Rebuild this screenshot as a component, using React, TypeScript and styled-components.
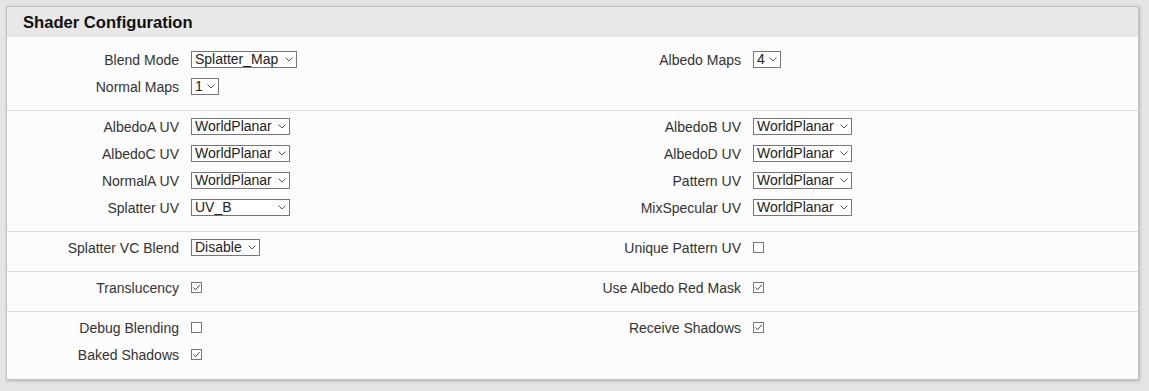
import React from 'react';
import styled, { createGlobalStyle } from 'styled-components';

const GlobalStyle = createGlobalStyle`
    html, body {
        margin: 0;
        padding: 0;
        background: #e5e5e5;
        font-family: "Liberation Sans", Arial, sans-serif;
    }
`;

const Page = styled.div`
    padding: 6px 10px 10px 6px;
`;

const Panel = styled.section`
    background: #fcfcfc;
    border: 1px solid #c2c2c2;
    box-shadow: 1px 1px 3px rgba(0, 0, 0, 0.22);
`;

const Header = styled.header`
    background: #e8e8e8;
    height: 28px;
    padding: 2px 16px 0;
    display: flex;
    align-items: center;
    font-size: 16.6px;
    font-weight: bold;
    color: #111;
`;

const Body = styled.div`
    padding: 7px 0 1px;
`;

const Section = styled.div`
    display: grid;
    grid-template-columns: 172px 366px 172px 1fr;
    grid-auto-rows: 27px;
    column-gap: 12px;
    align-items: center;
    padding: 2px 0 10px;
    & + & {
        border-top: 1px solid #dcdcdc;
    }
`;

const Label = styled.label`
    text-align: right;
    font-size: 14px;
    color: #333;
    white-space: nowrap;
`;

const SelectWrap = styled.span<{ $width: number }>`
    position: relative;
    display: inline-flex;
    width: ${({ $width }) => $width}px;
    height: 17px;
    justify-self: start;
`;

const NativeSelect = styled.select`
    appearance: none;
    width: 100%;
    height: 100%;
    margin: 0;
    padding: 0 14px 0 3px;
    border: 1px solid #767676;
    border-radius: 0;
    background: #fff;
    font-family: "Liberation Sans", Arial, sans-serif;
    font-size: 14px;
    line-height: 15px;
    color: #222;
    outline: none;
`;

const Chevron = styled.svg`
    position: absolute;
    right: 4px;
    top: 6px;
    pointer-events: none;
`;

const CheckBox = styled.span`
    width: 11px;
    height: 11px;
    box-sizing: border-box;
    border: 1px solid #767676;
    background: #fff;
    display: inline-flex;
    align-items: center;
    justify-content: center;
    justify-self: start;
`;

function Select({ value, width }: { value: string; width: number }) {
    return (
        <SelectWrap $width={width}>
            <NativeSelect defaultValue={value}>
                <option>{value}</option>
            </NativeSelect>
            <Chevron width="8" height="5" viewBox="0 0 8 5">
                <path d="M0.5 0.5 L4 4 L7.5 0.5" fill="none" stroke="#555" strokeWidth="1" />
            </Chevron>
        </SelectWrap>
    );
}

function Check({ checked }: { checked?: boolean }) {
    return (
        <CheckBox>
            {checked && (
                <svg width="9" height="9" viewBox="0 0 9 9">
                    <path d="M1.2 4.3 L3.6 6.8 L7.8 1.8" fill="none" stroke="#444" strokeWidth="1" />
                </svg>
            )}
        </CheckBox>
    );
}

export default function App() {
    return (
        <Page>
            <GlobalStyle />
            <Panel>
                <Header>Shader Configuration</Header>
                <Body>
                    <Section>
                        <Label>Blend Mode</Label>
                        <Select value="Splatter_Map" width={106} />
                        <Label>Albedo Maps</Label>
                        <Select value="4" width={28} />
                        <Label>Normal Maps</Label>
                        <Select value="1" width={28} />
                    </Section>
                    <Section>
                        <Label>AlbedoA UV</Label>
                        <Select value="WorldPlanar" width={99} />
                        <Label>AlbedoB UV</Label>
                        <Select value="WorldPlanar" width={99} />
                        <Label>AlbedoC UV</Label>
                        <Select value="WorldPlanar" width={99} />
                        <Label>AlbedoD UV</Label>
                        <Select value="WorldPlanar" width={99} />
                        <Label>NormalA UV</Label>
                        <Select value="WorldPlanar" width={99} />
                        <Label>Pattern UV</Label>
                        <Select value="WorldPlanar" width={99} />
                        <Label>Splatter UV</Label>
                        <Select value="UV_B" width={99} />
                        <Label>MixSpecular UV</Label>
                        <Select value="WorldPlanar" width={99} />
                    </Section>
                    <Section>
                        <Label>Splatter VC Blend</Label>
                        <Select value="Disable" width={69} />
                        <Label>Unique Pattern UV</Label>
                        <Check />
                    </Section>
                    <Section>
                        <Label>Translucency</Label>
                        <Check checked />
                        <Label>Use Albedo Red Mask</Label>
                        <Check checked />
                    </Section>
                    <Section>
                        <Label>Debug Blending</Label>
                        <Check />
                        <Label>Receive Shadows</Label>
                        <Check checked />
                        <Label>Baked Shadows</Label>
                        <Check checked />
                    </Section>
                </Body>
            </Panel>
        </Page>
    );
}
